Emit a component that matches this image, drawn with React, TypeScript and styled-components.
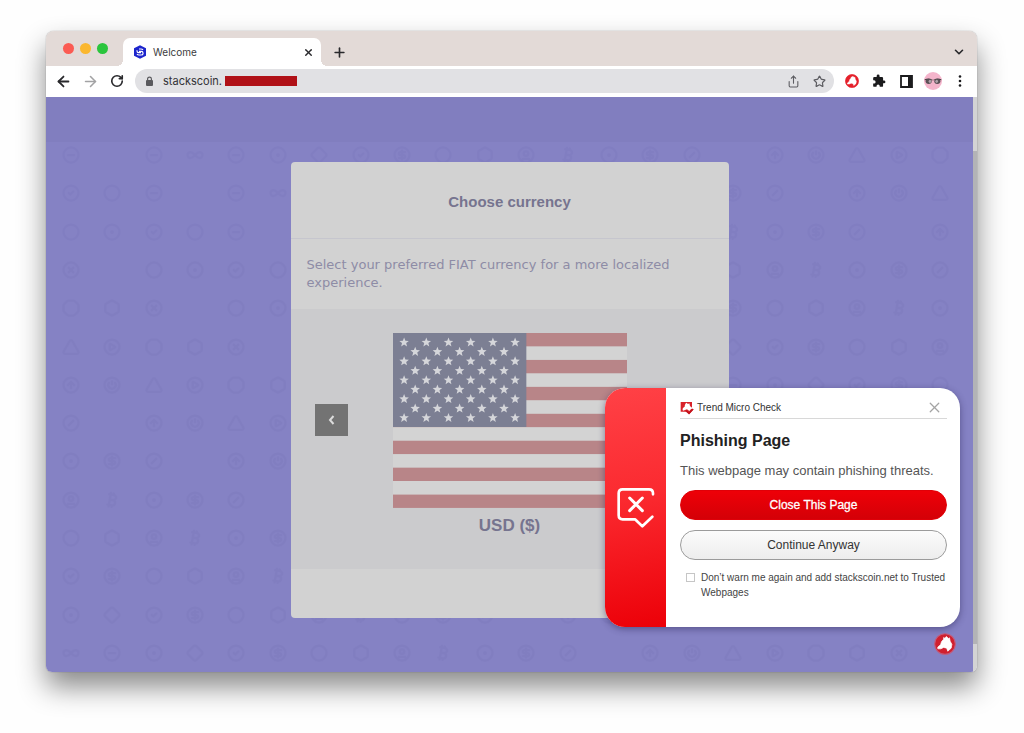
import React, { useState } from 'react';
import styled, { createGlobalStyle } from 'styled-components';
import {
  ArrowLeft, ArrowRight, RotateCw, X, Plus, ChevronDown, Star, Share,
  Bitcoin, Circle, CircleDot, CircleDollarSign, Hexagon, CirclePlay, CircleSlash,
  CircleCheck, Triangle, Diamond, CirclePower, CircleX, CircleMinus, Infinity as Loop, CircleUser, Octagon, CircleArrowUp,
} from 'lucide-react';

const ui = "Inter, Roboto, 'Liberation Sans', sans-serif";
const arial = "'Liberation Sans', Arial, sans-serif";

const GlobalStyle = createGlobalStyle`
  * { box-sizing: border-box; }
  body { margin: 0; background: #fefefe; font-family: ${arial}; }
  button, input { font: inherit; color: inherit; margin: 0; }
  button { padding: 0; border: 0; background: none; cursor: pointer; }
  svg { display: block; flex: none; }
`;

const Desktop = styled.main`
  padding: 31px 47px 61px 46px;
`;

const Browser = styled.div`
  border-radius: 8px 8px 6px 6px;
  overflow: hidden;
  background: #fff;
  box-shadow: 0 0 1px rgba(0, 0, 0, 0.5), 0 15px 28px rgba(0, 0, 0, 0.46);
`;

const TabBar = styled.header`
  display: flex;
  align-items: flex-end;
  height: 35px;
  padding: 0 9px 0 17px;
  background: #e3dad7;
`;

const Lights = styled.div`
  display: flex;
  gap: 6px;
  margin-right: 15px;
  padding-bottom: 12px;
`;

const Light = styled.button<{ $color: string }>`
  width: 11px;
  height: 11px;
  border-radius: 50%;
  background: ${(p) => p.$color};
`;

const Tab = styled.div`
  position: relative;
  display: flex;
  align-items: center;
  gap: 6px;
  width: 198px;
  height: 28px;
  padding: 0 8px 0 10px;
  border-radius: 7px 7px 0 0;
  background: #fff;
  color: #3c3c40;
  font: 10px/16px ${ui};
  &::before, &::after {
    content: '';
    position: absolute;
    bottom: 0;
    width: 6px;
    height: 6px;
  }
  &::before { right: 100%; background: radial-gradient(circle at 0 0, transparent 6px, #fff 6px); }
  &::after { left: 100%; background: radial-gradient(circle at 100% 0, transparent 6px, #fff 6px); }
`;

const TabTitle = styled.span`
  flex: 1;
`;

const IconButton = styled.button`
  display: flex;
  align-items: center;
  justify-content: center;
  width: 18px;
  height: 28px;
  color: #29292c;
`;

const CloseTab = styled(IconButton)`
  width: 10px;
`;

const NewTab = styled(IconButton)`
  margin: 0 auto 0 9px;
`;

const Toolbar = styled.nav`
  display: flex;
  align-items: center;
  gap: 9px;
  height: 31px;
  padding: 0 8px 1px;
  & > ${IconButton}:nth-child(2) { color: #a2a2a4; }
`;

const Address = styled.label`
  display: flex;
  align-items: center;
  flex: 1;
  height: 24px;
  padding: 0 5px 0 10px;
  border-radius: 12px;
  background: #e1e1e4;
  color: #333337;
  font: 11px/16px ${ui};
`;

const Url = styled.input`
  width: 62px;
  margin-left: 9px;
  padding: 0;
  border: 0;
  background: none;
  outline: none;
`;

const Redaction = styled.span`
  width: 72px;
  height: 10px;
  margin-right: auto;
  background: #b01117;
`;

const AddressButton = styled(IconButton)`
  width: 20px;
  height: 20px;
  margin-left: 6px;
  color: #5d5d62;
`;

const Extensions = styled.div`
  display: flex;
  gap: 9px;
  align-items: center;
  & ${IconButton} { color: #1b1b1d; }
`;

const Viewport = styled.div`
  position: relative;
  display: flex;
`;

const Page = styled.div`
  position: relative;
  flex: 1;
  padding: 65px 0 54px;
  background: linear-gradient(#817ebf 0 45px, #8582c4 45px);
`;

const Scrollbar = styled.div`
  width: 4px;
  padding: 54px 0 28px;
  background: #d3d3d4;
  &::after {
    content: '';
    display: block;
    height: 100%;
    background: #b3b3b6;
  }
`;

const CoinPattern = styled.div`
  position: absolute;
  inset: 39px 12px 0 4px;
  display: grid;
  grid-template-columns: repeat(22, 1fr);
  grid-auto-rows: 1fr;
  place-items: center;
  opacity: 0.035;
  color: #2b2470;
`;

const Card = styled.section`
  position: relative;
  max-width: 438px;
  margin: 0 auto;
  padding-bottom: 49px;
  border-radius: 4px;
  background: #d2d2d2;
  color: #76748f;
`;

const CardTitle = styled.h1`
  margin: 0;
  padding: 32px 16px 28px;
  border-bottom: 1px solid #c6c6ce;
  font: bold 15px/16px ${arial};
  text-align: center;
`;

const CardText = styled.p`
  margin: 0;
  padding: 17px 16px;
  color: #8e8ca6;
  font: 13px/18px 'DejaVu Sans', Verdana, sans-serif;
`;

const Carousel = styled.div`
  display: grid;
  grid-template-columns: 33px 1fr 33px;
  padding: 24px 24px 33px;
  background: #cbcbcd;
`;

const Previous = styled.button`
  display: flex;
  align-items: center;
  justify-content: center;
  height: 32px;
  margin-top: 71px;
  background: #737373;
  color: #dcdcdc;
`;

const Currency = styled.figure`
  display: flex;
  flex-direction: column;
  align-items: center;
  gap: 8px;
  margin: 0;
`;

const CurrencyName = styled.figcaption`
  font: bold 17px/20px ${arial};
`;

const Alert = styled.section`
  position: absolute;
  right: 17px;
  bottom: 45px;
  display: flex;
  width: 355px;
  border-radius: 20px;
  overflow: hidden;
  background: #fff;
  box-shadow: 0 2px 7px rgba(30, 25, 70, 0.45);
`;

const AlertSide = styled.div`
  display: flex;
  align-items: center;
  justify-content: center;
  width: 61px;
  background: linear-gradient(170deg, #ff4146, #fb2a30 45%, #ec0008);
`;

const AlertBody = styled.div`
  flex: 1;
  padding: 9px 13px 27px 14px;
`;

const AlertHeader = styled.div`
  display: flex;
  align-items: center;
  gap: 3px;
  height: 22px;
  border-bottom: 1px solid #d8d8d8;
  color: #333;
  font: 10px/16px ${arial};
`;

const AlertClose = styled(IconButton)`
  height: 16px;
  margin: 0 4px 0 auto;
  color: #a4a4a4;
`;

const AlertTitle = styled.h2`
  margin: 12px 0 10px;
  color: #222;
  font: bold 16px/20px ${arial};
`;

const AlertText = styled.p`
  margin: 0 0 9px;
  color: #555;
  font: 13px/20px ${arial};
`;

const Action = styled.button<{ $primary?: boolean }>`
  display: block;
  width: 100%;
  height: 30px;
  margin-bottom: 10px;
  border-radius: 15px;
  border: 1px solid ${(p) => (p.$primary ? '#e00008' : '#9b9b9b')};
  background: ${(p) => (p.$primary ? 'linear-gradient(#ee0008, #d40007)' : 'linear-gradient(#fbfbfb, #ededed)')};
  color: ${(p) => (p.$primary ? '#fff' : '#333')};
  font: 12px/16px ${arial};
  -webkit-text-stroke: ${(p) => (p.$primary ? '0.3px #fff' : '0')};
`;

const Trust = styled.label`
  display: flex;
  align-items: flex-start;
  gap: 6px;
  padding-left: 6px;
  color: #444;
  font: 10px/15px ${arial};
`;

const Tick = styled.input`
  appearance: none;
  flex: none;
  width: 9px;
  height: 9px;
  margin: 3px 0 0;
  border: 1px solid #c6c6c6;
  background: #fff;
  &:checked { background: #e00008; }
`;

const Badge = styled.button`
  position: absolute;
  right: 21px;
  bottom: 17px;
`;

const coins = [
  CircleMinus, null, CircleMinus, Loop, CircleMinus, CircleDot, Diamond, CircleCheck, CircleDollarSign, Circle, Hexagon,
  CircleUser, Bitcoin, CircleDot, CircleDollarSign, CircleSlash, null, CircleArrowUp, CirclePower, Triangle, CirclePlay, Octagon, Hexagon,
  CircleX, null, Circle, CircleDot, CircleCheck, Circle,
];
const coinCells = Array.from({ length: 22 * 14 }, (_, i) => coins[(i + Math.floor(i / 22) * 5) % coins.length]);

const Favicon = () => (
  <svg width="14" height="14" viewBox="0 0 42 42">
    <path d="M21 1 39 10v22L21 41 3 32V10z" fill="#1d25cc" />
    <path d="M12 16v2q0 5 5 5h7M30 26v-2q0-5-5-5h-7M12 27q2 3 6 3h6q6 0 6-4M30 15q-2-3-6-3h-6" fill="none" stroke="#fff" strokeWidth="3.500" />
  </svg>
);

const Lock = () => (
  <svg width="9" height="11" viewBox="0 0 9 11">
    <rect x="1" y="4" width="7" height="6" rx="1" fill="#5a5a5e" />
    <path d="M2.6 4.5V3a1.9 1.9 0 0 1 3.8 0v1.5" fill="none" stroke="#5a5a5e" strokeWidth="1.2" />
  </svg>
);

const TrendLogo = ({ size, color, ring }: { size: number; color: string; ring?: string }) => (
  <svg width={size} height={size} viewBox="0 0 64 64">
    <circle cx="32" cy="32" r="30" fill={color} stroke={ring ?? color} strokeWidth="3" />
    <path
      d="M36 10l6 6 3-2 2 10 5 9-2 11-10 9-3-9-9-2-8 4H11v-5l8-7 3-9 6-7v-5l3 2z"
      fill="#fff"
      stroke="#fff"
      strokeWidth="2"
      strokeLinejoin="round"
    />
  </svg>
);

const Puzzle = () => (
  <svg width="14" height="14" viewBox="0 0 24 24">
    <path d="M20.5 11H19V7a2 2 0 0 0-2-2h-4V3.500a2.500 2.500 0 0 0-5 0V5H4a2 2 0 0 0-2 2v3.800h1.500a2.700 2.700 0 0 1 0 5.400H2V20a2 2 0 0 0 2 2h3.800v-1.500a2.700 2.700 0 0 1 5.400 0V22H17a2 2 0 0 0 2-2v-4h1.500a2.500 2.500 0 0 0 0-5z" fill="currentColor" />
  </svg>
);

const SidePanel = () => (
  <svg width="13" height="13" viewBox="0 0 13 13">
    <path d="M1 1h11v11H1z" fill="none" stroke="currentColor" strokeWidth="1.800" />
    <path d="M8 1h4v11H8z" fill="currentColor" />
  </svg>
);

const Avatar = () => (
  <svg width="18" height="18" viewBox="0 0 54 54">
    <circle cx="27" cy="27" r="27" fill="#f4b4cb" />
    <path d="M2 22q12-5 23 1h4q12-6 23-1v3H2z" fill="#4b4046" />
    <ellipse cx="14" cy="28" rx="9" ry="8" fill="#5a5056" />
    <ellipse cx="40" cy="28" rx="9" ry="8" fill="#5a5056" />
    <ellipse cx="18" cy="28" rx="4" ry="5" fill="#b0a2aa" />
    <ellipse cx="38" cy="28" rx="4" ry="5" fill="#b0a2aa" />
  </svg>
);

const Dots = () => (
  <svg width="4" height="12" viewBox="0 0 4 12" fill="currentColor">
    <circle cx="2" cy="1.500" r="1.300" />
    <circle cx="2" cy="6" r="1.300" />
    <circle cx="2" cy="10.500" r="1.300" />
  </svg>
);

const starPoints = (cx: number, cy: number) =>
  Array.from({ length: 10 }, (_, k) => {
    const r = k % 2 ? 6.5 : 15;
    const a = (k * Math.PI) / 5 - Math.PI / 2;
    return `${(cx + r * Math.cos(a)).toFixed(1)},${(cy + r * Math.sin(a)).toFixed(1)}`;
  }).join(' ');

const Flag = () => (
  <svg width="234" height="175" viewBox="0 0 702 525" role="img" aria-label="Flag of the United States">
    <rect width="702" height="525" fill="#d3d3d3" />
    {Array.from({ length: 7 }, (_, i) => (
      <rect key={i} y={i * 80.8} width="702" height="40" fill="#b88588" />
    ))}
    <rect width="400" height="282" fill="#7c7f93" />
    {Array.from({ length: 9 }, (_, row) =>
      Array.from({ length: row % 2 ? 5 : 6 }, (_, col) => (
        <polygon
          key={`${row}-${col}`}
          points={starPoints((row % 2 ? 66.6 : 33.3) + col * 66.6, 28.3 + row * 28.3)}
          fill="#d5d6da"
        />
      )),
    )}
  </svg>
);

const CheckLogo = () => (
  <svg width="14" height="14" viewBox="0 0 42 42">
    <path d="M2 3h34v14l-3 6 8 2-13 14-8-7H2z" fill="#d8222a" />
    <path d="M19 5l5 4 4-2 2 8 6 6-8 9-7-5-12 4c-3-6 0-10 5-12 0-5 2-9 5-12z" fill="#fff" />
    <path d="M18 29l9 8 12-13" fill="none" stroke="#c3131c" strokeWidth="5" />
  </svg>
);

const BlockedBubble = () => (
  <svg width="38" height="41" viewBox="80 316 114 123" fill="none" stroke="#fff" strokeWidth="8" strokeLinecap="round" strokeLinejoin="round">
    <path d="M188 338v-3q0-12-12-12H97q-12 0-12 12v66q0 12 12 12h37l22 21 30-29" />
    <path d="M118 349l38 38M156 349l-38 38" strokeWidth="9" />
  </svg>
);

export default function App() {
  const [trusted, setTrusted] = useState(false);
  return (
    <>
      <GlobalStyle />
      <Desktop>
        <Browser>
          <TabBar>
            <Lights>
              <Light $color="#fb5b53" aria-label="Close window" />
              <Light $color="#fbb72f" aria-label="Minimize window" />
              <Light $color="#2bc53d" aria-label="Zoom window" />
            </Lights>
            <Tab>
              <Favicon />
              <TabTitle>Welcome</TabTitle>
              <CloseTab aria-label="Close tab"><X size={11} strokeWidth={3} /></CloseTab>
            </Tab>
            <NewTab aria-label="New tab"><Plus size={15} strokeWidth={2.6} /></NewTab>
            <IconButton aria-label="Tab search"><ChevronDown size={14} strokeWidth={2.8} /></IconButton>
          </TabBar>
          <Toolbar>
            <IconButton aria-label="Back"><ArrowLeft size={17} strokeWidth={2.5} /></IconButton>
            <IconButton aria-label="Forward"><ArrowRight size={17} strokeWidth={2.2} /></IconButton>
            <IconButton aria-label="Reload"><RotateCw size={14} strokeWidth={2.8} /></IconButton>
            <Address>
              <Lock />
              <Url aria-label="Address" defaultValue="stackscoin." />
              <Redaction />
              <AddressButton aria-label="Share"><Share size={13} strokeWidth={2} /></AddressButton>
              <AddressButton aria-label="Bookmark"><Star size={13} strokeWidth={2.2} /></AddressButton>
            </Address>
            <Extensions>
              <IconButton aria-label="Trend Micro Check"><TrendLogo size={14} color="#e5202b" /></IconButton>
              <IconButton aria-label="Extensions"><Puzzle /></IconButton>
              <IconButton aria-label="Side panel"><SidePanel /></IconButton>
              <IconButton aria-label="Profile"><Avatar /></IconButton>
              <IconButton aria-label="Menu"><Dots /></IconButton>
            </Extensions>
          </Toolbar>
          <Viewport>
            <Page>
              <CoinPattern aria-hidden="true">
                {coinCells.map((Coin, i) => (Coin ? <Coin key={i} size={18} strokeWidth={3} /> : <span key={i} />))}
              </CoinPattern>
              <Card>
                <CardTitle>Choose currency</CardTitle>
                <CardText>Select your preferred FIAT currency for a more localized experience.</CardText>
                <Carousel>
                  <Previous aria-label="Previous currency">
                    <svg width="7" height="10" viewBox="0 0 7 10" fill="none" stroke="currentColor" strokeWidth="2">
                      <path d="M5.500 1 2 5l3.500 4" />
                    </svg>
                  </Previous>
                  <Currency>
                    <Flag />
                    <CurrencyName>USD ($)</CurrencyName>
                  </Currency>
                </Carousel>
              </Card>
            </Page>
            <Scrollbar />
            <Alert role="alertdialog" aria-labelledby="alert-title">
              <AlertSide><BlockedBubble /></AlertSide>
              <AlertBody>
                <AlertHeader>
                  <CheckLogo />
                  Trend Micro Check
                  <AlertClose aria-label="Dismiss"><X size={17} strokeWidth={1.8} /></AlertClose>
                </AlertHeader>
                <AlertTitle id="alert-title">Phishing Page</AlertTitle>
                <AlertText>This webpage may contain phishing threats.</AlertText>
                <Action $primary>Close This Page</Action>
                <Action>Continue Anyway</Action>
                <Trust>
                  <Tick type="checkbox" checked={trusted} onChange={(e) => setTrusted(e.target.checked)} />
                  Don’t warn me again and add stackscoin.net to Trusted Webpages
                </Trust>
              </AlertBody>
            </Alert>
            <Badge aria-label="Open Trend Micro Check"><TrendLogo size={22} color="#d0202f" ring="#c25c7c" /></Badge>
          </Viewport>
        </Browser>
      </Desktop>
    </>
  );
}
